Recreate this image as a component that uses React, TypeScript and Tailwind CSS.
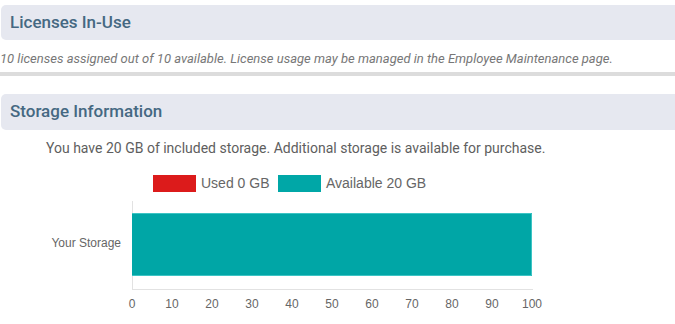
import React from 'react';

const ticks = [0, 10, 20, 30, 40, 50, 60, 70, 80, 90, 100];

function SectionHeader({ title }: { title: string }) {
  return (
    <div className="ml-[1px] flex h-[36px] items-center rounded-l-[5px] bg-[#e6e8f0] pl-[9px]">
      <h2 className="text-[17px] font-medium text-[#456882]">{title}</h2>
    </div>
  );
}

function StorageChart() {
  const font = "'Liberation Sans', Arial, sans-serif";
  return (
    <svg width={675} height={166} className="block">
      {/* legend */}
      <rect x={153} y={17} width={43} height={17} fill="#dc1b1b" />
      <text x={201} y={30} fontSize={14} fill="#666" fontFamily={font}>
        Used 0 GB
      </text>
      <rect x={278} y={17} width={43} height={17} fill="#00a7a7" />
      <text x={326} y={30} fontSize={14} fill="#666" fontFamily={font}>
        Available 20 GB
      </text>

      {/* axes */}
      <line x1={132.5} y1={43} x2={132.5} y2={131.5} stroke="#e2e2e2" />
      <line x1={132} y1={131.5} x2={533} y2={131.5} stroke="#e2e2e2" />

      {/* bar */}
      <rect x={132} y={55} width={400} height={63} fill="#00a6a6" />
      <path d="M132 55.5 H531.5 V117.5 H132" fill="none" stroke="#3cc4c4" />

      <text x={121} y={89} fontSize={12} fill="#666" textAnchor="end" fontFamily={font}>
        Your Storage
      </text>

      {ticks.map((t, i) => (
        <text
          key={t}
          x={132 + i * 40}
          y={150}
          fontSize={12}
          fill="#666"
          textAnchor="middle"
          fontFamily={font}
        >
          {t}
        </text>
      ))}
    </svg>
  );
}

export default function App() {
  return (
    <div className="h-[324px] w-[675px] overflow-hidden bg-white pt-[5px] font-['Roboto',sans-serif]">
      <div className="h-[35px]">
        <div className="ml-[1px] flex h-[35px] items-center rounded-l-[5px] bg-[#e6e8f0] pl-[9px]">
          <h2 className="text-[17px] font-medium text-[#456882]">Licenses In-Use</h2>
        </div>
      </div>
      <p className="mt-[10px] h-[18px] text-[13px] leading-[18px] italic text-[#777]">
        10 licenses assigned out of 10 available. License usage may be managed in the Employee
        Maintenance page.
      </p>
      <div className="mt-[4px] h-[4px] bg-[#dcdcdc]" />

      <div className="mt-[18px]">
        <SectionHeader title="Storage Information" />
      </div>
      <p className="mt-[8px] pl-[46px] text-[14px] leading-[20px] text-[#5e5e5e]">
        You have 20 GB of included storage. Additional storage is available for purchase.
      </p>
      <StorageChart />
    </div>
  );
}
